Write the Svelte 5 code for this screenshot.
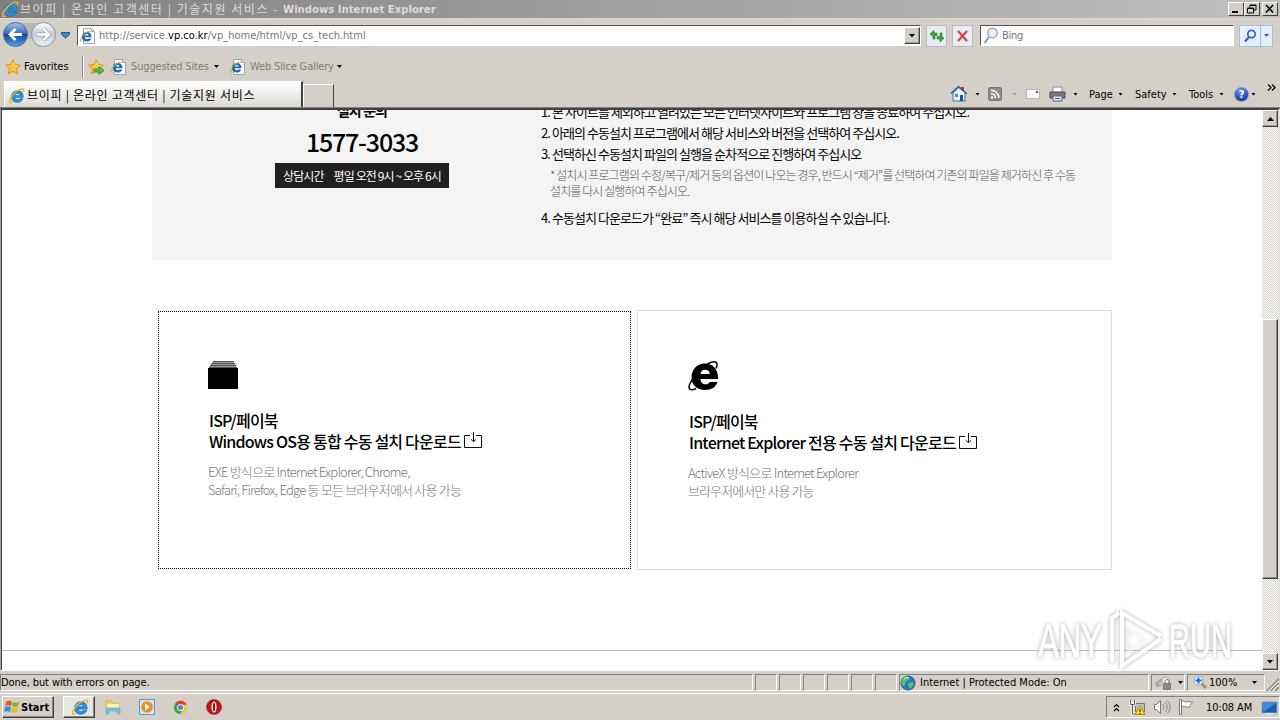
<script lang="ts">
  const pageTitle = '브이피 | 온라인 고객센터 | 기술지원 서비스';

  const steps = [
    '1. 본 사이트를 제외하고 열려있는 모든 인터넷사이트와 프로그램 창을 종료하여 주십시오.',
    '2. 아래의 수동설치 프로그램에서 해당 서비스와 버전을 선택하여 주십시오.',
    '3. 선택하신 수동설치 파일의 실행을 순차적으로 진행하여 주십시오',
  ];

  const menus = ['Page', 'Safety', 'Tools'];
  const emptyPanes = [1, 2, 3, 4, 5, 6];
</script>

{#snippet ie(size: number)}
  <svg width={size} height={size} viewBox="0 0 16 16">
    <path d="M14.300 9.600H6c.2 1.500 1 2.200 2.500 2.200 1 0 1.800-.4 2.300-1.100h3.200c-.9 2.300-2.900 3.700-5.600 3.700-3.700 0-6-2.300-6-5.800s2.600-6 6.200-6 6 2.500 5.700 7zM6.100 7.400h4.600c-.2-1.300-1-2-2.300-2s-2.100.7-2.300 2z" fill="#2b8fdc" stroke="#155aa6" stroke-width=".5" />
    <path d="M3 14C.8 15.500-.2 14 1.200 10.900 3 7 7.500 2.700 11.500 1.300c3-1 3.900.4 2.900 2.700" fill="none" stroke="#e9b824" stroke-width="1.400" />
  </svg>
{/snippet}

{#snippet iePage()}
  <svg width="16" height="16" viewBox="0 0 16 16">
    <path d="M3.500.5h8l3 3v12h-11z" fill="#fff" stroke="#9aa7b5" />
    <path d="M11.500.5v3h3" fill="#dfe9f2" stroke="#9aa7b5" />
    <path d="M11.500 9.300H4.700c.2 1.300.9 1.900 2.200 1.900.8 0 1.300-.3 1.700-.8h2.700c-.7 2-2.300 3.200-4.500 3.200-3 0-4.900-1.900-4.900-4.800s2.100-4.900 4.900-4.900 4.900 1.900 4.700 5.400zM4.800 7.500h3.800c-.2-1-.8-1.600-1.800-1.600s-1.800.6-2 1.600z" fill="#2069b8" />
    <path d="M2 13C-1 14.500.7 9.500 4 6.300 7 3.400 10.600 2.200 11 4" fill="none" stroke="#dcae2c" />
  </svg>
{/snippet}

{#snippet star()}
  <path d="M8 .8l2.200 4.800 5.200.6-3.900 3.500 1.100 5.200L8 12.300l-4.600 2.600 1.100-5.200L.6 6.200l5.200-.6z" fill="#fcc644" stroke="#e58a13" stroke-width="1" />
  <path d="M8 2.800l1.500 3.600 3.500.4" fill="none" stroke="#fff0a8" />
{/snippet}

{#snippet download()}
  <svg class="download" width="18" height="17" viewBox="0 0 18 17">
    <path d="M6 3.500H.5v12h17v-12H12M9.500 0v9.500M7 7.500l2.500 2 2.500-2" fill="none" stroke="#111" />
  </svg>
{/snippet}

<div class="screen">
  <header class="titlebar">
    {@render ie(17)}
    <span class="window-title">{pageTitle} -</span>
    <b>Windows Internet Explorer</b>
    <div class="window-buttons">
      <span class="win-btn"><svg width="12" height="10"><path d="M2 8h6" stroke="#000" stroke-width="2" /></svg></span>
      <span class="win-btn"><svg width="12" height="10"><path d="M4 3.500V1h6v5H8M4 1.500h6M1.500 4h6v5h-6zM1.500 4.500h6" fill="none" stroke="#000" /></svg></span>
      <span class="win-btn close"><svg width="12" height="10"><path d="M2 1l7 7.500M9 1L2 8.500" stroke="#000" stroke-width="1.600" /></svg></span>
    </div>
  </header>

  <nav class="navbar">
    <svg width="56" height="28" viewBox="0 0 56 28">
      <defs>
        <linearGradient id="back" x1="0" y1="0" x2="0" y2="1">
          <stop offset="0" stop-color="#a9c8ee" />
          <stop offset=".48" stop-color="#2f65bd" />
          <stop offset=".5" stop-color="#1345a0" />
          <stop offset="1" stop-color="#4fa5ef" />
        </linearGradient>
        <linearGradient id="forward" x1="0" y1="0" x2="0" y2="1">
          <stop offset="0" stop-color="#fff" />
          <stop offset=".5" stop-color="#c3cbd8" />
          <stop offset="1" stop-color="#eef3f8" />
        </linearGradient>
      </defs>
      <path d="M12 1h32v16H12z" fill="#bab8b5" />
      <circle cx="42.500" cy="12.500" r="12" fill="url(#forward)" stroke="#8b929c" />
      <circle cx="14.500" cy="12.500" r="12" fill="url(#back)" stroke="#4a6b9a" />
      <path d="M21 12.500H9.500M14.500 7L9 12.500l5.500 5.500" fill="none" stroke="#fff" stroke-width="2.800" />
      <path d="M36 12.500h11.500M42.500 7l5.500 5.500-5.500 5.500" fill="none" stroke="#98a0ab" stroke-width="3.800" />
      <path d="M36 12.500h11.500M42.500 7l5.500 5.500-5.500 5.500" fill="none" stroke="#fff" stroke-width="2.400" />
    </svg>
    <svg class="history" width="10" height="7"><path d="M.5.500h8v2l-4 3.500-4-3.500z" fill="#3d8cc9" stroke="#1d5487" /></svg>

    <div class="address">
      {@render iePage()}
      <span class="url">http://service.<em>vp.co.kr</em>/vp_home/html/vp_cs_tech.html</span>
      <span class="drop"><i class="caret wide"></i></span>
    </div>

    <span class="tool-btn">
      <svg width="16" height="16"><path d="M1 6l4-3.500V5h3v2.500H6V11H4V8.500zM15 10l-4 4v-3H8V8.500h3V5h2v4z" fill="#3ea23c" stroke="#23762a" stroke-width=".6" /></svg>
    </span>
    <span class="tool-btn">
      <svg width="16" height="16"><path d="M3 3l9 10M12 3L3 13" stroke="#d2434a" stroke-width="2.200" /></svg>
    </span>

    <div class="search">
      <svg width="16" height="18"><circle cx="9.500" cy="6" r="4.800" fill="#e4f0f8" stroke="#8fa2b5" stroke-width="1.300" /><path d="M6 10l-4.500 6" stroke="#8b97a4" stroke-width="2" /></svg>
      <span>Bing</span>
    </div>
    <div class="search-btn">
      <span><svg width="14" height="14"><circle cx="8.500" cy="5" r="3.700" fill="#e8f3ff" stroke="#2a62c5" stroke-width="1.700" /><path d="M6 8l-4 4.500" stroke="#2a62c5" stroke-width="2.200" /></svg></span>
      <span><i class="caret blue"></i></span>
    </div>
  </nav>

  <div class="favorites">
    <svg width="16" height="16" viewBox="0 0 16 16">{@render star()}</svg>
    <span class="fav-label">Favorites</span>
    <span class="divider"></span>
    <svg width="17" height="16" viewBox="0 0 17 16">
      {@render star()}
      <path d="M6 10h5V7.500l5 4-5 4V13H6z" fill="#55bf4c" stroke="#248a2b" stroke-width=".8" />
    </svg>
    <span class="link-icon">{@render iePage()}</span>
    <span class="link suggested">Suggested Sites</span>
    <i class="caret"></i>
    <span class="link-icon slices">{@render iePage()}</span>
    <span class="link gallery">Web Slice Gallery</span>
    <i class="caret"></i>
  </div>

  <div class="tabs">
    <div class="tab">
      {@render ie(16)}
      <span>{pageTitle}</span>
    </div>
    <div class="new-tab"></div>
    <div class="commands">
      <svg width="18" height="18"><path d="M11 2h3v4h-3z" fill="#b33" /><path d="M3 8v8h12V8L9 2.500z" fill="#e9f1fb" stroke="#4b6fa8" /><path d="M1 8.500L8.500 1.500 17 9" fill="none" stroke="#3460b0" stroke-width="1.600" /><path d="M10 10h3v6h-3z" fill="#1d5687" /><path d="M5 9h3v3H5z" fill="#4b88ca" /></svg>
      <i class="caret"></i>
      <svg width="15" height="15"><rect x=".5" y=".5" width="13" height="13" rx="1.500" fill="#8c8c8c" stroke="#777" /><circle cx="4" cy="10.500" r="1.300" fill="#fff" /><path d="M3 6.500A4.500 4.500 0 017.500 11M3 3.300A8 8 0 0111 11" fill="none" stroke="#fff" stroke-width="1.500" /></svg>
      <i class="caret faded"></i>
      <svg width="15" height="12"><rect x=".5" y="1.500" width="13" height="9" fill="#f8f8f8" stroke="#b8b8bd" /><path d="M10 3h2v2h-2z" fill="#c33" /></svg>
      <svg width="17" height="16"><path d="M4 1h9v6H4z" fill="#fff" stroke="#888" /><path d="M1 6h15v6H1z" fill="#77797d" stroke="#484b50" /><path d="M4 10h9v5H4z" fill="#dceaff" stroke="#55626f" /><path d="M6 12.500h5" stroke="#2b67b3" /></svg>
      <i class="caret"></i>
      {#each menus as menu}
        <span class="menu">{menu}</span>
        <i class="caret"></i>
      {/each}
      <span class="help">?</span>
      <i class="caret"></i>
      <svg class="more" width="9" height="7"><path d="M1 .5l3 3-3 3M5 .5l3 3-3 3" fill="none" stroke="#000" stroke-width="1.300" /></svg>
    </div>
  </div>

  <div class="viewport">
    <main>
      <section class="guide">
        <div class="contact">
          <strong class="ask">설치 문의</strong>
          <div class="phone">1577-3033</div>
          <div class="hours"><span>상담시간</span><span>평일 오전 9시 ~ 오후 6시</span></div>
        </div>
        <div class="steps">
          {#each steps as step}
            <p class="step">{step}</p>
          {/each}
          <p class="note">
            * 설치시 프로그램의 수정/복구/제거 등의 옵션이 나오는 경우, 반드시 “제거”를 선택하여 기존의 파일을 제거하신 후 수동<br />
            설치를 다시 실행하여 주십시오.
          </p>
          <p class="step">4. 수동설치 다운로드가 “완료” 즉시 해당 서비스를 이용하실 수 있습니다.</p>
        </div>
      </section>

      <section class="cards">
        <article class="card focused">
          <svg width="30" height="28"><path d="M5 .5h21M3.500 2.500h24M2 4.500h26M1 6.500h28" stroke="#555" /><path d="M4 1.500h22M2.500 3.500h25M1.500 5.500h27" stroke="#999" /><path d="M0 7h30v21H0z" /></svg>
          <h2>ISP/페이북<br />Windows OS용 통합 수동 설치 다운로드{@render download()}</h2>
          <p class="wide-text">EXE 방식으로 Internet Explorer, Chrome,<br />Safari, Firefox, Edge 등 모든 브라우저에서 사용 가능</p>
        </article>
        <article class="card">
          <svg width="31" height="30" viewBox="0 0 31 30">
            <path d="M30 18H12.500c.3 3.800 2.200 5.300 5 5.300 2 0 3.400-.7 4.200-2.300h7.800c-1.600 5-6 8-12.400 8C9 29 3.500 24 3.500 16.500 3.500 8.500 9 2.500 17 2.500c8.500 0 13.500 6.500 13 15.500zM12.500 13h9.300c-.3-2.800-2-4.200-4.700-4.200S13 10.200 12.500 13z" fill-rule="evenodd" />
            <path d="M8 27.500c-6 3-9 .5-5.500-6C7 12 16 4 22.500 1.500c6-2 8 .5 5.500 6" fill="none" stroke="#000" stroke-width="1.500" />
          </svg>
          <h2>ISP/페이북<br />Internet Explorer 전용 수동 설치 다운로드{@render download()}</h2>
          <p><span class="wide-text">ActiveX 방식으로 Internet Explorer</span><br />브라우저에서만 사용 가능</p>
        </article>
      </section>
      <hr />
    </main>

    <div class="scrollbar">
      <span class="scroll-btn"><i class="caret wide up"></i></span>
      <span class="thumb"></span>
      <span class="scroll-btn"><i class="caret wide"></i></span>
    </div>
  </div>

  <footer class="status">
    <div class="pane message">Done, but with errors on page.</div>
    {#each emptyPanes as pane (pane)}
      <div class="pane"></div>
    {/each}
    <div class="pane zone">
      <svg width="16" height="16"><circle cx="8" cy="8" r="7" fill="#2478cf" stroke="#285486" /><path d="M3 3c3-3 7-1 6 1S5 6 5 9s-3 2-3.500 0S2 4 3 3zM9 8c3-2 6 0 4 3s-4 3-4 1-2-2 0-4z" fill="#5cc35b" /><path d="M4 4c2-2 4-2 5-1" stroke="#c9efff" fill="none" /></svg>
      <span>Internet | Protected Mode: On</span>
    </div>
    <div class="pane protect">
      <svg width="20" height="16"><path d="M2 10c2-6 8-8 9-4M1 7l1 4 4-1" fill="none" stroke="#a5a5a5" stroke-width="2" /><path d="M7 6c0-5 7-5 7 0v3H7z" fill="#f2f2f2" stroke="#aaa" /><path d="M8.500 8.500h7v6h-7z" fill="#8a8a8a" stroke="#777" /><path d="M10 8V6c0-2 4-2 4 0v2" fill="none" stroke="#777" /></svg>
      <i class="caret"></i>
    </div>
    <div class="pane zoom">
      <svg width="15" height="15"><path d="M8 8l5 5" stroke="#ae8b63" stroke-width="3" /><circle cx="5.500" cy="5.500" r="4.500" fill="#f0f8ff" stroke="#82a9d2" /><path d="M5.500 2.500v6M2.500 5.500h6" stroke="#1967c9" stroke-width="2" /></svg>
      <span>100%</span>
      <i class="caret"></i>
    </div>
    <svg class="grip" width="13" height="14"><path d="M1 14L13 2M5 14l8-8M9 14l4-4" stroke="#808080" stroke-width="1.500" /><path d="M2.500 14L13 3.500M6.500 14L13 7.500" stroke="#fff" /></svg>
  </footer>

  <div class="taskbar">
    <div class="start">
      <svg width="17" height="16"><path d="M2 3c2-2 4-1 6 0L7 7C5 6 3 6 1 7z" fill="#e55d24" /><path d="M9 3c2 1 4 1 6 0l-1 4c-2 1-4 1-6 0z" fill="#76b82a" /><path d="M1 8c2-1 4-1 6 0l-1 5c-2-1-4-1-6 0z" fill="#3a8edb" /><path d="M8 8c2 1 4 1 6 0l-1 5c-2 1-4 1-6 0z" fill="#f5b920" /></svg>
      <b>Start</b>
    </div>
    <div class="task">{@render ie(17)}</div>
    <svg class="explorer" width="16" height="16"><path d="M1 2h6l1 2h6v6H1z" fill="#f0ce62" stroke="#d8b656" /><path d="M2 5h12v4H2z" fill="#fff0ad" /><path d="M1 9h14v6h-3v-3H4v3H1z" fill="#78bce2" stroke="#64a8d1" stroke-width=".6" /></svg>
    <svg class="player" width="16" height="16"><path d="M.5.500h15v15H.5z" fill="#cfe4f8" stroke="#5b99cf" /><circle cx="8" cy="8" r="5.800" fill="#f58b1c" /><path d="M6 4.500l5 3.500-5 3.500z" fill="#fff" /></svg>
    <svg class="chrome" width="15" height="15" viewBox="0 0 16 16"><circle cx="8" cy="8" r="7" fill="#f5c629" /><path d="M8 8L2 4.200A7 7 0 0114.500 5H8z" fill="#df3f31" /><path d="M8 8L2 4.200A7 7 0 007.500 15L11 9z" fill="#37a852" /><circle cx="8" cy="8" r="3.600" fill="#fff" /><circle cx="8" cy="8" r="2.700" fill="#4383ed" /></svg>
    <svg class="opera" width="16" height="16"><circle cx="8" cy="8" r="7.500" fill="#c0161b" stroke="#8d1014" stroke-width=".6" /><ellipse cx="8" cy="8" rx="2.500" ry="5.500" fill="#fff" /><ellipse cx="8" cy="8" rx="1.100" ry="4.500" fill="#8d1014" /></svg>

    <div class="tray">
      <svg class="expand" width="7" height="9"><path d="M1 4l2.500-2.500L6 4M1 8l2.500-2.500L6 8" fill="none" stroke="#000" stroke-width="1.200" /></svg>
      <svg class="network" width="17" height="17"><path d="M6.500 4.500h9v8h-9z" fill="#bbb" stroke="#777" /><path d="M1.500 1.500v4h4v-4M3.500 6v9h5" fill="none" stroke="#fff" stroke-width="2.500" /><path d="M1.500 1v4.500h4V1M3.500 6v9h5" fill="none" stroke="#555" /><path d="M11 7l5 8.500H6z" fill="#ffda22" stroke="#b68d0b" /><path d="M11 10v3M11 14v1" stroke="#222" /></svg>
      <svg class="speaker" width="18" height="16"><path d="M1.500 5.500h2l4-4v13l-4-4h-2z" fill="#fff" stroke="#777" /><path d="M9.500 5c2 2 2 4 0 6M12 3c3 3 3 7 0 10M14 1c4 4 4 10 0 14" fill="none" stroke="#888" /></svg>
      <svg class="flag" width="16" height="16"><path d="M1.500.500h2v15h-2zM3.500 2c3-1 3 2 5 1s4 0 6 0c-2 2-2 3-3 5-3 1-5-2-8 0z" fill="#fff" stroke="#777" /></svg>
      <span class="clock">10:08 AM</span>
      <svg class="desktop" width="17" height="15"><path d="M1 2h15v11H1z" fill="#1c5daf" stroke="#78a5db" /><path d="M2 3h13L4 11H2z" fill="#4289d7" /><path d="M4 13.500h9" stroke="#dce8f4" /></svg>
    </div>
  </div>

  <div class="watermark">
    <span>ANY</span>
    <svg width="58" height="64" viewBox="0 0 58 64">
      <path d="M4 55V10l7-5M14 52V5l39 23M53 31L14 58V22" fill="none" stroke="#fff" stroke-width="4" />
      <path d="M20 20v25l17-13z" fill="none" stroke="#fff" stroke-width="1" />
    </svg>
    <span>RUN</span>
  </div>
</div>

<style>
  :global(body) {
    margin: 0;
    overflow: hidden;
  }

  .screen {
    position: relative;
    display: grid;
    grid-template-rows: 18px 36px 27px 27px 563px 23px 26px;
    width: 1280px;
    height: 720px;
    overflow: hidden;
    background: #d4d0c8;
    color: #000;
    font: 11px 'DejaVu Sans Condensed', 'DejaVu Sans', 'Noto Sans CJK KR', sans-serif;
    white-space: nowrap;
  }

  .screen * {
    box-sizing: border-box;
  }

  svg {
    display: block;
    flex-shrink: 0;
  }

  .caret {
    width: 5px;
    height: 3px;
    flex-shrink: 0;
    background: #000;
    clip-path: polygon(0 0, 100% 0, 50% 100%);
  }

  .caret.wide {
    width: 7px;
    height: 4px;
  }

  .caret.up {
    transform: rotate(180deg);
  }

  .caret.blue {
    background: #2060b5;
  }

  .caret.faded {
    background: #9b9893;
  }

  .titlebar {
    display: flex;
    align-items: center;
    padding: 0 2px;
    background: linear-gradient(90deg, #808080, #c0c0c0);
    color: #dedbd5;
  }

  .window-title {
    width: 264px;
    margin-left: 1px;
    font: 12px/16px 'Noto Sans CJK KR', sans-serif;
    letter-spacing: 1.55px;
  }

  .titlebar b {
    letter-spacing: 0.02px;
  }

  .window-title + b {
    margin-left: -1px;
    font-size: 11.2px;
  }

  .window-buttons {
    display: flex;
    margin-left: auto;
  }

  .win-btn {
    width: 16px;
    height: 14px;
    padding: 1px;
    border: 1px solid;
    border-color: #fff #404040 #404040 #fff;
    background: #d4d0c8;
  }

  .win-btn.close {
    margin-left: 2px;
  }

  .navbar {
    display: flex;
    align-items: center;
    padding: 0 0 2px 1px;
    border-top: 1px solid #dedbd6;
  }

  .history {
    margin: 0 6px 0 4px;
  }

  .address {
    display: flex;
    align-items: center;
    width: 844px;
    height: 21px;
    padding-left: 2px;
    border: 1px solid;
    border-color: #555 #fff #fff #555;
    background: #fff;
  }

  .url {
    margin-left: 3px;
    color: #777;
    letter-spacing: 0.01px;
  }

  .url em {
    color: #000;
    font-style: normal;
  }

  .drop,
  .scroll-btn {
    display: grid;
    place-items: center;
    width: 16px;
    height: 17px;
    border: 1px solid;
    border-color: #fff #404040 #404040 #fff;
    box-shadow: inset -1px -1px #999;
    background: #d4d0c8;
  }

  .drop {
    margin-left: auto;
  }

  .tool-btn {
    display: grid;
    place-items: center;
    width: 21px;
    height: 22px;
    margin-left: 5px;
    border: 1px solid #b8bcc2;
    background: #e6edf2;
  }

  .search {
    display: flex;
    align-items: center;
    gap: 3px;
    width: 254px;
    height: 21px;
    margin-left: 7px;
    padding-left: 2px;
    border: 1px solid;
    border-color: #555 #fff #fff #555;
    background: #fff;
    color: #777;
    letter-spacing: -0.3px;
  }

  .search-btn {
    display: flex;
    height: 22px;
    margin-left: 5px;
    border: 1px solid #aebed0;
    background: #e5effa;
  }

  .search-btn span {
    display: grid;
    place-items: center;
    width: 20px;
  }

  .search-btn span + span {
    width: 12px;
    border-left: 1px solid #aebed0;
  }

  .favorites {
    display: flex;
    align-items: center;
    padding: 0 0 2px 5px;
  }

  .fav-label {
    width: 57px;
    margin-left: 3px;
  }

  .divider {
    width: 2px;
    height: 22px;
    margin: 0 4px 0 1px;
    border-left: 1px solid #888;
    border-right: 1px solid #fff;
  }

  .link-icon {
    margin-left: 6px;
  }

  .link-icon.slices {
    margin-left: 11px;
  }

  .link {
    margin-left: 4px;
    color: #7d7b77;
    letter-spacing: -0.15px;
  }

  .suggested {
    width: 83px;
  }

  .gallery {
    width: 87px;
  }

  .tabs {
    display: flex;
    padding-left: 4px;
    border-bottom: 1px solid #808080;
  }

  .tab {
    display: flex;
    align-items: center;
    width: 299px;
    padding: 2px 0 0 4px;
    border: 1px solid #fff;
    border-right: 2px solid #404040;
    border-bottom: 0;
    background: linear-gradient(#fff, #dcd9d3);
    font: 12px/16px 'Noto Sans CJK KR', sans-serif;
    letter-spacing: 0.72px;
  }

  .tab span {
    margin: -2px 0 0 2px;
  }

  .new-tab {
    width: 31px;
    margin-top: 3px;
    border: 1px solid #fff;
    border-right-color: #404040;
    border-bottom: 0;
  }

  .commands {
    display: grid;
    grid-template-columns: 25px 13px 24px 14px 23px 24px 16px 29px 17px 37px 17px 30px 15px 17px 16px 13px;
    align-items: center;
    margin-left: 616px;
  }

  .menu {
    letter-spacing: 0;
  }

  .help {
    width: 15px;
    height: 15px;
    border: 1px solid #7d96c4;
    border-radius: 50%;
    background: radial-gradient(circle at 40% 20%, #6f98e4, #1c43a4 70%);
    color: #fff;
    font-weight: bold;
    line-height: 13px;
    text-align: center;
  }

  .more {
    margin-bottom: 13px;
  }

  .viewport {
    display: flex;
    overflow: hidden;
    border-top: 2px solid #404040;
    border-left: 1px solid #a8a5a0;
    border-bottom: 1px solid #fff;
    border-right: 2px solid #e6e3de;
    background: #fff;
  }

  main {
    display: flex;
    flex-direction: column;
    flex: 1;
    border-left: 1px solid #404040;
    font-family: 'Noto Sans CJK KR', sans-serif;
  }

  p,
  h2 {
    margin: 0;
  }

  .guide {
    display: flex;
    width: 960px;
    height: 150px;
    flex-shrink: 0;
    margin-left: 150px;
    overflow: hidden;
    background: #f4f4f4;
  }

  .contact {
    display: flex;
    flex-direction: column;
    align-items: center;
    width: 420px;
    margin-top: -12px;
  }

  .ask {
    font-size: 14px;
    line-height: 24px;
    letter-spacing: -0.9px;
  }

  .phone {
    height: 41px;
    font-size: 25px;
    font-weight: 500;
    line-height: 38px;
    letter-spacing: -1.2px;
  }

  .hours {
    display: flex;
    gap: 10px;
    height: 25px;
    padding: 0 8px;
    background: #202020;
    color: #fff;
    font-size: 12px;
    line-height: 25px;
    letter-spacing: -0.9px;
  }

  .steps {
    margin: -9px 0 0 -31px;
  }

  .step {
    font-size: 13px;
    line-height: 21px;
    letter-spacing: -0.94px;
  }

  .note {
    margin: 3px 0 8px 9px;
    color: #555;
    font-size: 12px;
    font-weight: 300;
    line-height: 16px;
    letter-spacing: -0.9px;
  }

  .cards {
    display: flex;
    align-items: center;
    gap: 6px;
    height: 260px;
    flex-shrink: 0;
    margin: 50px 0 80px 156px;
  }

  .card {
    width: 475px;
    height: 260px;
    padding: 50px;
    border: 1px solid #ddd;
  }

  .focused {
    width: 473px;
    height: 258px;
    padding: 49px;
    border: 1px dotted #000;
  }

  .card h2 {
    margin: 20px 0 0 1px;
    font-size: 16px;
    font-weight: 500;
    line-height: 21px;
    letter-spacing: -0.78px;
  }

  .focused h2 {
    margin-top: 21px;
  }

  .download {
    display: inline-block;
    margin-left: 3px;
    vertical-align: -1px;
  }

  .card p {
    margin-top: 11px;
    color: #777;
    font-size: 13px;
    font-weight: 300;
    line-height: 18px;
    letter-spacing: -0.9px;
  }

  .card .wide-text {
    letter-spacing: -0.78px;
  }

  hr {
    width: 100%;
    height: 1px;
    margin: 0;
    border: 0;
    background: #bbb;
  }

  .scrollbar {
    display: flex;
    flex-direction: column;
    width: 16px;
    background: repeating-conic-gradient(#fff 0 25%, #d4d0c8 0 50%) 0 0 / 2px 2px;
  }

  .thumb {
    height: 260px;
    margin: 192px 0 auto;
    border: 1px solid;
    border-color: #fff #404040 #404040 #fff;
    box-shadow: inset -1px -1px #888;
    background: #d4d0c8;
  }

  .status {
    display: flex;
    padding: 3px 0 2px;
    gap: 2px;
    border-bottom: 1px solid #fff;
  }

  .pane {
    display: flex;
    align-items: center;
    width: 22px;
    border: 1px solid;
    border-color: #808080 #fff #fff #808080;
  }

  .message {
    width: 753px;
    letter-spacing: -0.1px;
  }

  .zone {
    width: 250px;
    gap: 4px;
  }

  .protect {
    width: 34px;
    gap: 3px;
    padding-left: 3px;
  }

  .zoom {
    width: 78px;
    padding-left: 5px;
  }

  .zoom span {
    width: 43px;
    margin-left: 1px;
  }

  .grip {
    margin: 3px 0 0 -1px;
  }

  .taskbar {
    display: flex;
    align-items: center;
    padding-left: 2px;
  }

  .start,
  .task {
    display: flex;
    align-items: center;
    height: 22px;
    border: 1px solid;
    border-color: #fff #404040 #404040 #fff;
    box-shadow: inset -1px -1px #888;
  }

  .start {
    width: 52px;
    padding-left: 1px;
  }

  .task {
    width: 32px;
    margin-left: 9px;
    padding-left: 8px;
    background: #e7e5e0;
  }

  .explorer {
    margin-left: 10px;
  }

  .player,
  .chrome,
  .opera {
    margin-left: 18px;
  }

  .tray {
    display: flex;
    align-items: center;
    width: 174px;
    height: 22px;
    margin: 0 0 0 auto;
    padding-left: 6px;
    border: 1px solid;
    border-color: #808080 #fff #fff #808080;
  }

  .network {
    margin-left: 9px;
  }

  .speaker,
  .flag {
    margin-left: 7px;
  }

  .clock {
    width: 51px;
    margin-left: 12px;
    letter-spacing: -0.1px;
  }

  .desktop {
    margin-left: 4px;
  }

  .watermark {
    position: absolute;
    left: 1038px;
    top: 608px;
    display: flex;
    align-items: center;
    color: #fff;
    font: 47px 'Liberation Sans', sans-serif;
    -webkit-text-stroke: 1px #fff;
    filter: drop-shadow(0 0 2px #aaa);
  }

  .watermark span {
    width: 70px;
    transform: scaleX(0.66);
    transform-origin: 0 50%;
  }

  .watermark span:last-child {
    margin-left: 3px;
    transform: scaleX(0.62);
  }
</style>
